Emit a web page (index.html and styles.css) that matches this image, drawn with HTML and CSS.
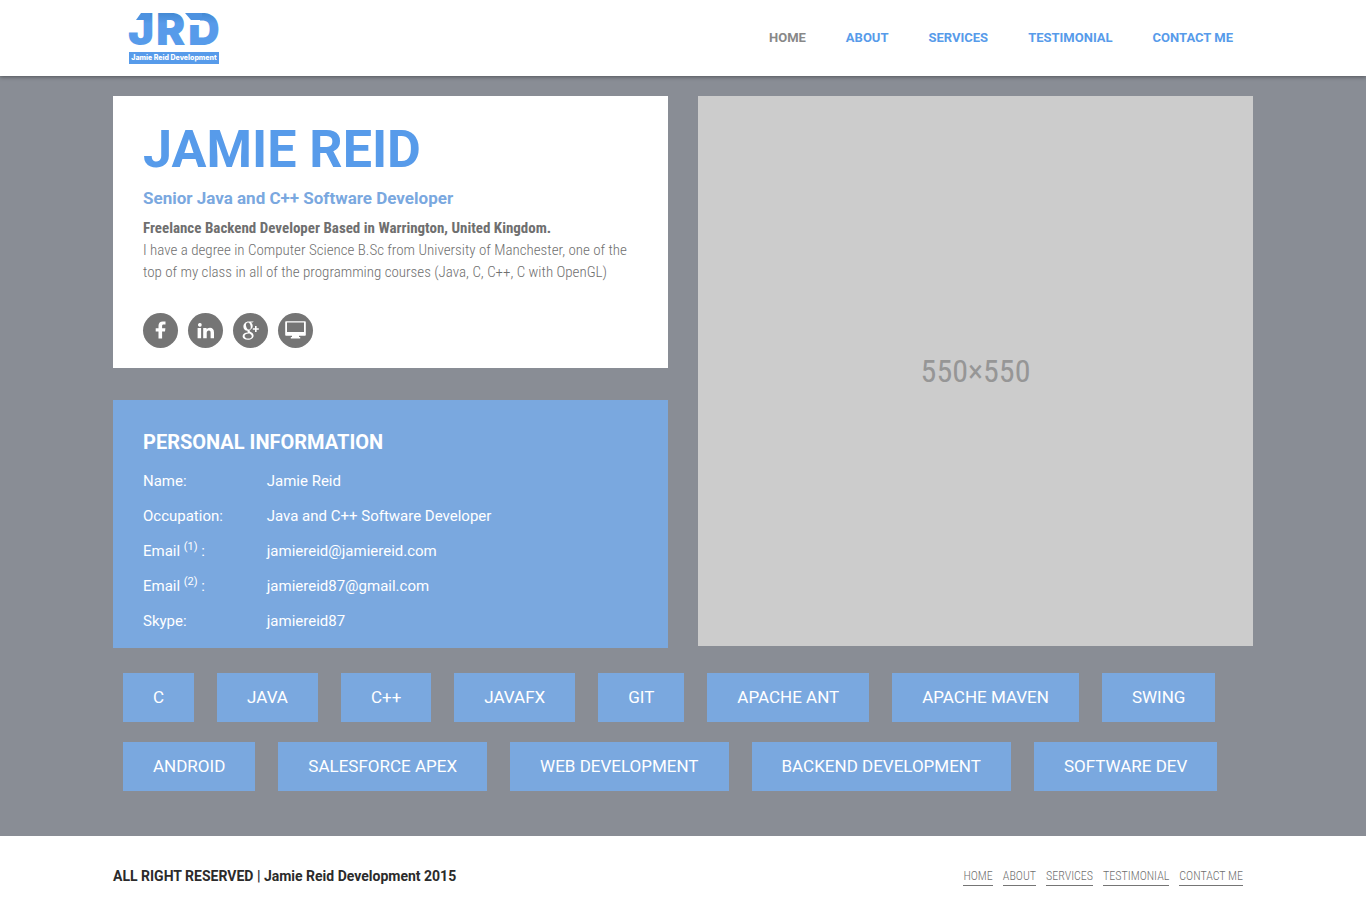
FILE: index.html
```html
<!DOCTYPE html>
<html lang="en">
<head>
<meta charset="utf-8">
<meta name="viewport" content="width=device-width, initial-scale=1">
<title>Jamie Reid Development</title>
<link rel="stylesheet" href="styles.css">
</head>
<body>
<header class="site-header">
  <div class="container header-row">
    <a class="logo" href="#home" aria-label="Jamie Reid Development">
      <svg width="92" height="52" viewBox="0 0 92 52">
        <defs>
          <linearGradient id="shade" x1="0" y1="0" x2="0" y2="1">
            <stop offset="0.2" stop-color="#4389d3"/>
            <stop offset="0.4" stop-color="#579bea"/>
          </linearGradient>
        </defs>
        <g class="logo-letters">
          <text x="0" y="33">J</text>
          <text x="28" y="33">R</text>
          <text x="60" y="33">D</text>
        </g>
        <path d="M13 1h9v7H8z" fill="#4d92e0"/>
        <path d="M60 7h12v6H60z" fill="#fff"/>
        <path d="M57 1h17v7H63z" fill="#4d92e0"/>
        <path d="M1 40h90v12H1z" fill="#579bea"/>
        <text class="logo-caption" x="46" y="48" text-anchor="middle">Jamie Reid Development</text>
      </svg>
    </a>
    <nav class="main-nav" aria-label="Main">
      <a class="active" href="#home">HOME</a>
      <a href="#about">ABOUT</a>
      <a href="#services">SERVICES</a>
      <a href="#testimonial">TESTIMONIAL</a>
      <a href="#contact">CONTACT ME</a>
    </nav>
  </div>
</header>

<main class="main" id="home">
  <div class="container">
    <div class="columns">
      <div class="left">
        <section class="card intro">
          <h1>JAMIE REID</h1>
          <h2>Senior Java and C++ Software Developer</h2>
          <p><strong>Freelance Backend Developer Based in Warrington, United Kingdom.</strong><br>
          I have a degree in Computer Science B.Sc from University of Manchester, one of the top of my class in all of the programming courses (Java, C, C++, C with OpenGL)</p>
          <div class="social">
            <a href="#facebook" aria-label="Facebook"><svg viewBox="0 0 35 35"><path d="M22.500 8.600v3h-1.800c-1.300 0-1.600.7-1.600 1.600v2h3.300l-.4 3.200h-2.900v7h-3.600v-7h-2.800v-3.200h2.800v-2.500c0-2.800 1.700-4.300 4.300-4.300 1.200 0 2.300.1 2.700.2z"/></svg></a>
            <a href="#linkedin" aria-label="LinkedIn"><svg viewBox="0 0 35 35"><path d="M9.600 15h3.500v10.200H9.600zM11.400 10a1.900 1.900 0 1 1 0 3.700 1.900 1.900 0 0 1 0-3.700zM15.200 15h3.400v1.500c.7-1 1.700-1.800 3.400-1.800 2.300 0 4 1.500 4 4.700v5.800h-3.400v-5.400c0-1.400-.5-2.300-1.700-2.300-1.400 0-2.200.9-2.200 2.400v5.300h-3.500z"/></svg></a>
            <a href="#googleplus" aria-label="Google Plus"><svg viewBox="0 0 35 35"><path fill-rule="evenodd" d="M15.500 8.500h5.300l-1.400 1h-1.500c1.200.8 1.800 2 1.800 3.400 0 3.200-3.100 3.500-3.100 4.800 0 1.300 4 1.800 4 5 0 2.200-2.200 4-5.700 4-3.300 0-5.300-1.400-5.300-3.500 0-2.200 2.200-3.500 5.400-3.600-.5-.6-.7-1.200-.4-1.900-2.800 0-4.200-1.800-4.200-4 0-3 2.400-5.200 5.100-5.200zM15 9.400c-1.500 0-2.300 1.300-2 3.300.3 2.400 1.500 3.900 2.900 3.900 1.300 0 2-1 1.800-3-.2-2.400-1.200-4.200-2.700-4.200zM15.800 20.400c-2.600 0-4.200 1-4.200 2.600 0 1.500 1.400 2.600 3.600 2.600 2.300 0 3.600-.9 3.600-2.400 0-1.300-1-1.800-2.200-2.800zM22 13h1.600v2.200h2.200v1.600h-2.200V19H22v-2.200h-2.200v-1.600H22z"/></svg></a>
            <a href="#website" aria-label="Website"><svg viewBox="0 0 35 35"><path fill-rule="evenodd" d="M8 8.200h19q.8 0 .8.800V22q0 .8-.8.800h-6v1.300h1.200v1.500h-9.400v-1.500H14v-1.300H8q-.8 0-.8-.8V9q0-.8.800-.8zM9 9.600v9.400h17V9.600z"/></svg></a>
          </div>
        </section>
        <section class="card info">
          <h3>PERSONAL INFORMATION</h3>
          <dl>
            <dt>Name:</dt><dd>Jamie Reid</dd>
            <dt>Occupation:</dt><dd>Java and C++ Software Developer</dd>
            <dt>Email <sup>(1)</sup> :</dt><dd>jamiereid@jamiereid.com</dd>
            <dt>Email <sup>(2)</sup> :</dt><dd>jamiereid87@gmail.com</dd>
            <dt>Skype:</dt><dd>jamiereid87</dd>
          </dl>
        </section>
      </div>
      <div class="photo">550×550</div>
    </div>
    <ul class="tags">
      <li>C</li>
      <li>JAVA</li>
      <li>C++</li>
      <li>JAVAFX</li>
      <li>GIT</li>
      <li>APACHE ANT</li>
      <li>APACHE MAVEN</li>
      <li>SWING</li>
      <li>ANDROID</li>
      <li>SALESFORCE APEX</li>
      <li>WEB DEVELOPMENT</li>
      <li>BACKEND DEVELOPMENT</li>
      <li>SOFTWARE DEV</li>
    </ul>
  </div>
</main>

<footer class="site-footer">
  <div class="container footer-row">
    <p>ALL RIGHT RESERVED | Jamie Reid Development 2015</p>
    <nav class="footer-nav" aria-label="Footer">
      <a href="#home">HOME</a>
      <a href="#about">ABOUT</a>
      <a href="#services">SERVICES</a>
      <a href="#testimonial">TESTIMONIAL</a>
      <a href="#contact">CONTACT ME</a>
    </nav>
  </div>
</footer>
</body>
</html>
```
FILE: styles.css
```css
* { box-sizing: border-box; }

body {
  margin: 0;
  background: #fff;
  color: #6f6f6f;
  font-family: Roboto, "Open Sans", sans-serif;
  font-size: 14px;
  line-height: 22px;
}

h1, h2, h3, p, dl, dd, ul { margin: 0; padding: 0; }
a { color: inherit; text-decoration: none; }

.container {
  max-width: 1140px;
  margin: 0 auto;
}

.site-header {
  position: relative;
  background: #fff;
  box-shadow: 0 1px 4px rgba(0, 0, 0, 0.4);
}

.header-row {
  display: flex;
  align-items: center;
  justify-content: space-between;
  padding: 12px 20px 12px 15px;
}

.logo, .logo svg {
  display: block;
  overflow: visible;
}

.logo-letters {
  fill: url(#shade);
  font-family: Inter, sans-serif;
  font-size: 44px;
  font-weight: 900;
}

.logo-caption {
  fill: #fff;
  font-family: Inter, sans-serif;
  font-size: 7px;
  font-weight: 800;
}

.main-nav {
  display: flex;
  gap: 40px;
  color: #579bea;
  font-size: 13px;
  font-weight: 700;
}

.main-nav .active { color: #888; }

.main {
  padding: 20px 0 45px;
  background: #898d95;
}

.columns {
  display: grid;
  grid-template-columns: 1fr 1fr;
  gap: 30px;
  align-items: start;
}

.left {
  display: grid;
  gap: 32px;
}

.card { padding: 20px 30px; }
.intro { background: #fff; }

.intro h1 {
  color: #579bea;
  font-size: 52px;
  line-height: 68px;
}

.intro h2 {
  margin: 3px 0 8px;
  color: #7aa8df;
  font-size: 17px;
  line-height: 22px;
}

.intro p {
  font-family: "Roboto Condensed", Roboto, sans-serif;
  font-size: 15px;
  font-weight: 300;
}

.intro strong { font-weight: 700; }

.social {
  display: flex;
  gap: 10px;
  margin-top: 30px;
}

.social a {
  width: 35px;
  height: 35px;
  border-radius: 50%;
  background: #757575;
}

.social svg {
  display: block;
  fill: #fff;
}

.info {
  padding-bottom: 9px;
  background: #7aa8df;
  color: #fff;
  font-size: 15px;
}

.info h3 {
  padding: 8px 0;
  font-size: 20px;
  line-height: 28px;
}

.info dl {
  display: grid;
  grid-template-columns: 1fr 3fr;
  line-height: 35px;
}

.info sup {
  font-size: 11px;
  line-height: 0;
}

.photo {
  display: flex;
  align-items: center;
  justify-content: center;
  height: 550px;
  background: #ccc;
  color: #969696;
  font-family: "Roboto Condensed", Roboto, sans-serif;
  font-size: 32px;
}

.tags {
  display: flex;
  flex-wrap: wrap;
  gap: 20px 23px;
  padding: 25px 10px 0;
  list-style: none;
}

.tags li {
  padding: 12px 30px;
  background: #7aa8df;
  color: #fff;
  font-size: 17px;
  line-height: 25px;
}

.footer-row {
  display: flex;
  align-items: center;
  justify-content: space-between;
  padding: 29px 10px 29px 0;
}

.footer-row p {
  color: #2b2b2b;
  font-weight: 700;
}

.footer-nav {
  display: flex;
  gap: 10px;
  font-family: "Roboto Condensed", Roboto, sans-serif;
  font-size: 12px;
  font-weight: 300;
  line-height: 18px;
}

.footer-nav a { border-bottom: 1px solid #757575; }
```
